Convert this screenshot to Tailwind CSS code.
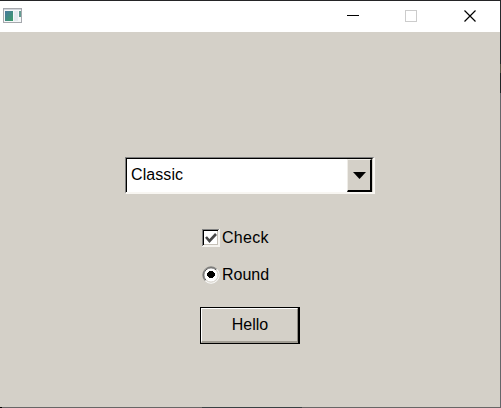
<!DOCTYPE html>
<html lang="en">
<head>
<meta charset="utf-8">
<script src="https://cdn.jsdelivr.net/npm/@tailwindcss/browser@4"></script>
</head>
<body class="flex flex-col w-[501px] h-[408px] overflow-hidden border-t border-[#242426] bg-[#686666] font-['Liberation_Sans',Arial,sans-serif] text-[16px] text-black">
<div class="flex w-[501px] h-[406px] shrink-0">
  <div class="flex flex-col w-[500px] h-[406px] bg-[#d4d0c8]">
    <header class="flex h-[31px] shrink-0 items-start justify-between bg-white">
      <svg class="mt-[7px] ml-[3px]" width="20" height="16" viewBox="0 0 20 16" shape-rendering="crispEdges">
        <defs><linearGradient id="g" x2="1" y2="1"><stop stop-color="#4778a0"/><stop offset="1" stop-color="#3b9c67"/></linearGradient></defs>
        <rect x=".5" y=".5" width="18" height="14" fill="#f5f7f8" stroke="#a5a8ad"/>
        <path d="M1 1.5h17" stroke="#d0d4da"/>
        <rect x="2" y="3" width="8" height="10" fill="url(#g)"/>
        <rect x="11" y="3" width="4" height="10" fill="#e3eaee"/>
        <rect x="16" y="3" width="2" height="6" fill="#639b91"/>
      </svg>
      <svg class="shrink-0" width="153" height="31" viewBox="0 0 153 31" fill="none" shape-rendering="crispEdges">
        <path d="M0 14.5h12" stroke="#000"/>
        <rect x="58.5" y="9.5" width="11" height="11" stroke="#cccccc"/>
        <path d="M117.5 9.5l11 11m0-11l-11 11" stroke="#000" stroke-width="1.2" shape-rendering="auto"/>
      </svg>
    </header>
    <main class="flex flex-col w-[500px]">
      <div class="mt-[125px] ml-[125px] w-[250px] h-[37px] border-t border-l border-r-2 border-b-2 border-t-[#808080] border-l-[#808080] border-r-[#f8f6f2] border-b-[#f8f6f2]">
        <div class="flex w-[247px] h-[34px] border-t border-l border-r border-t-black border-l-black border-r-[#d4d0c8] bg-white">
          <div class="w-[220px] h-[33px] pl-[4px] leading-[32px] tracking-[0.08px]">Classic</div>
          <div class="flex w-[25px] h-[33px] items-center justify-center bg-[#d4d0c8] border-t border-l border-r-2 border-b-2 border-t-[#efede8] border-l-[#efede8] border-r-black border-b-black">
            <svg width="13" height="7" viewBox="0 0 13 7"><path d="M0 0h13L6.5 7z"/></svg>
          </div>
        </div>
      </div>
      <label class="flex mt-[35px] ml-[202px] h-[18px] items-center">
        <svg width="18" height="18" viewBox="0 0 18 18" fill="none" shape-rendering="crispEdges">
          <path d="M0 0h18v18H0z" fill="#f5f3ef"/><path d="M.5 17V.5H17" stroke="#808080"/><path d="M1.5 16V1.5H16" stroke="#000"/><path d="M2 2h13v13H2z" fill="#fff"/><path d="M15.5 2v13.5H2" stroke="#c6c1b8"/>
          <path d="M4 8l3.5 4L14 5" stroke="#484848" stroke-width="2.6" shape-rendering="auto"/>
        </svg>
        <span class="ml-[2px] leading-[18px] tracking-[0.3px]">Check</span>
      </label>
      <label class="flex mt-[19px] ml-[202px] h-[18px] items-center">
        <svg width="18" height="18" viewBox="0 0 18 18" fill="none">
          <circle cx="9" cy="9" r="7.5" fill="#fff"/>
          <path d="M3.2 14.8A8.1 8.1 0 0 1 14.8 3.2" stroke="#808080"/>
          <path d="M3.9 14.1A7.2 7.2 0 0 1 14.1 3.9" stroke="#333" stroke-width=".8"/>
          <path d="M14.8 3.2A8.1 8.1 0 0 1 3.2 14.8" stroke="#fff"/>
          <path d="M14 4A7 7 0 0 1 4 14" stroke="#d4d0c8"/>
          <path d="M7 5h4v1h1v1h1v3h-1v1h-1v1H7v-1H6v-1H5V7h1V6h1z" fill="#000"/>
        </svg>
        <span class="ml-[2px] leading-[18px]">Round</span>
      </label>
      <button class="mt-[23px] ml-[200px] w-[100px] h-[37px] border-t border-l border-r-2 border-b border-black bg-[#d4d0c8]">
        <span class="block w-[97px] h-[35px] border-t border-l border-r border-b-2 border-t-white border-l-white border-r-[#8f8b83] border-b-[#a09c93] pl-px leading-[32px] text-center">Hello</span>
      </button>
    </main>
  </div>
  <div class="flex flex-col w-px h-[406px] bg-[#66666a]"><i class="h-[63px] bg-[#25292c]"></i><i class="h-[9px] bg-[#555342]"></i><i class="h-[20px] bg-[#202426]"></i></div>
</div>
<div class="flex h-px"><i class="w-[2px] bg-black"></i><i class="ml-[200px] w-[100px] bg-[#394143]"></i></div>
</body>
</html>
